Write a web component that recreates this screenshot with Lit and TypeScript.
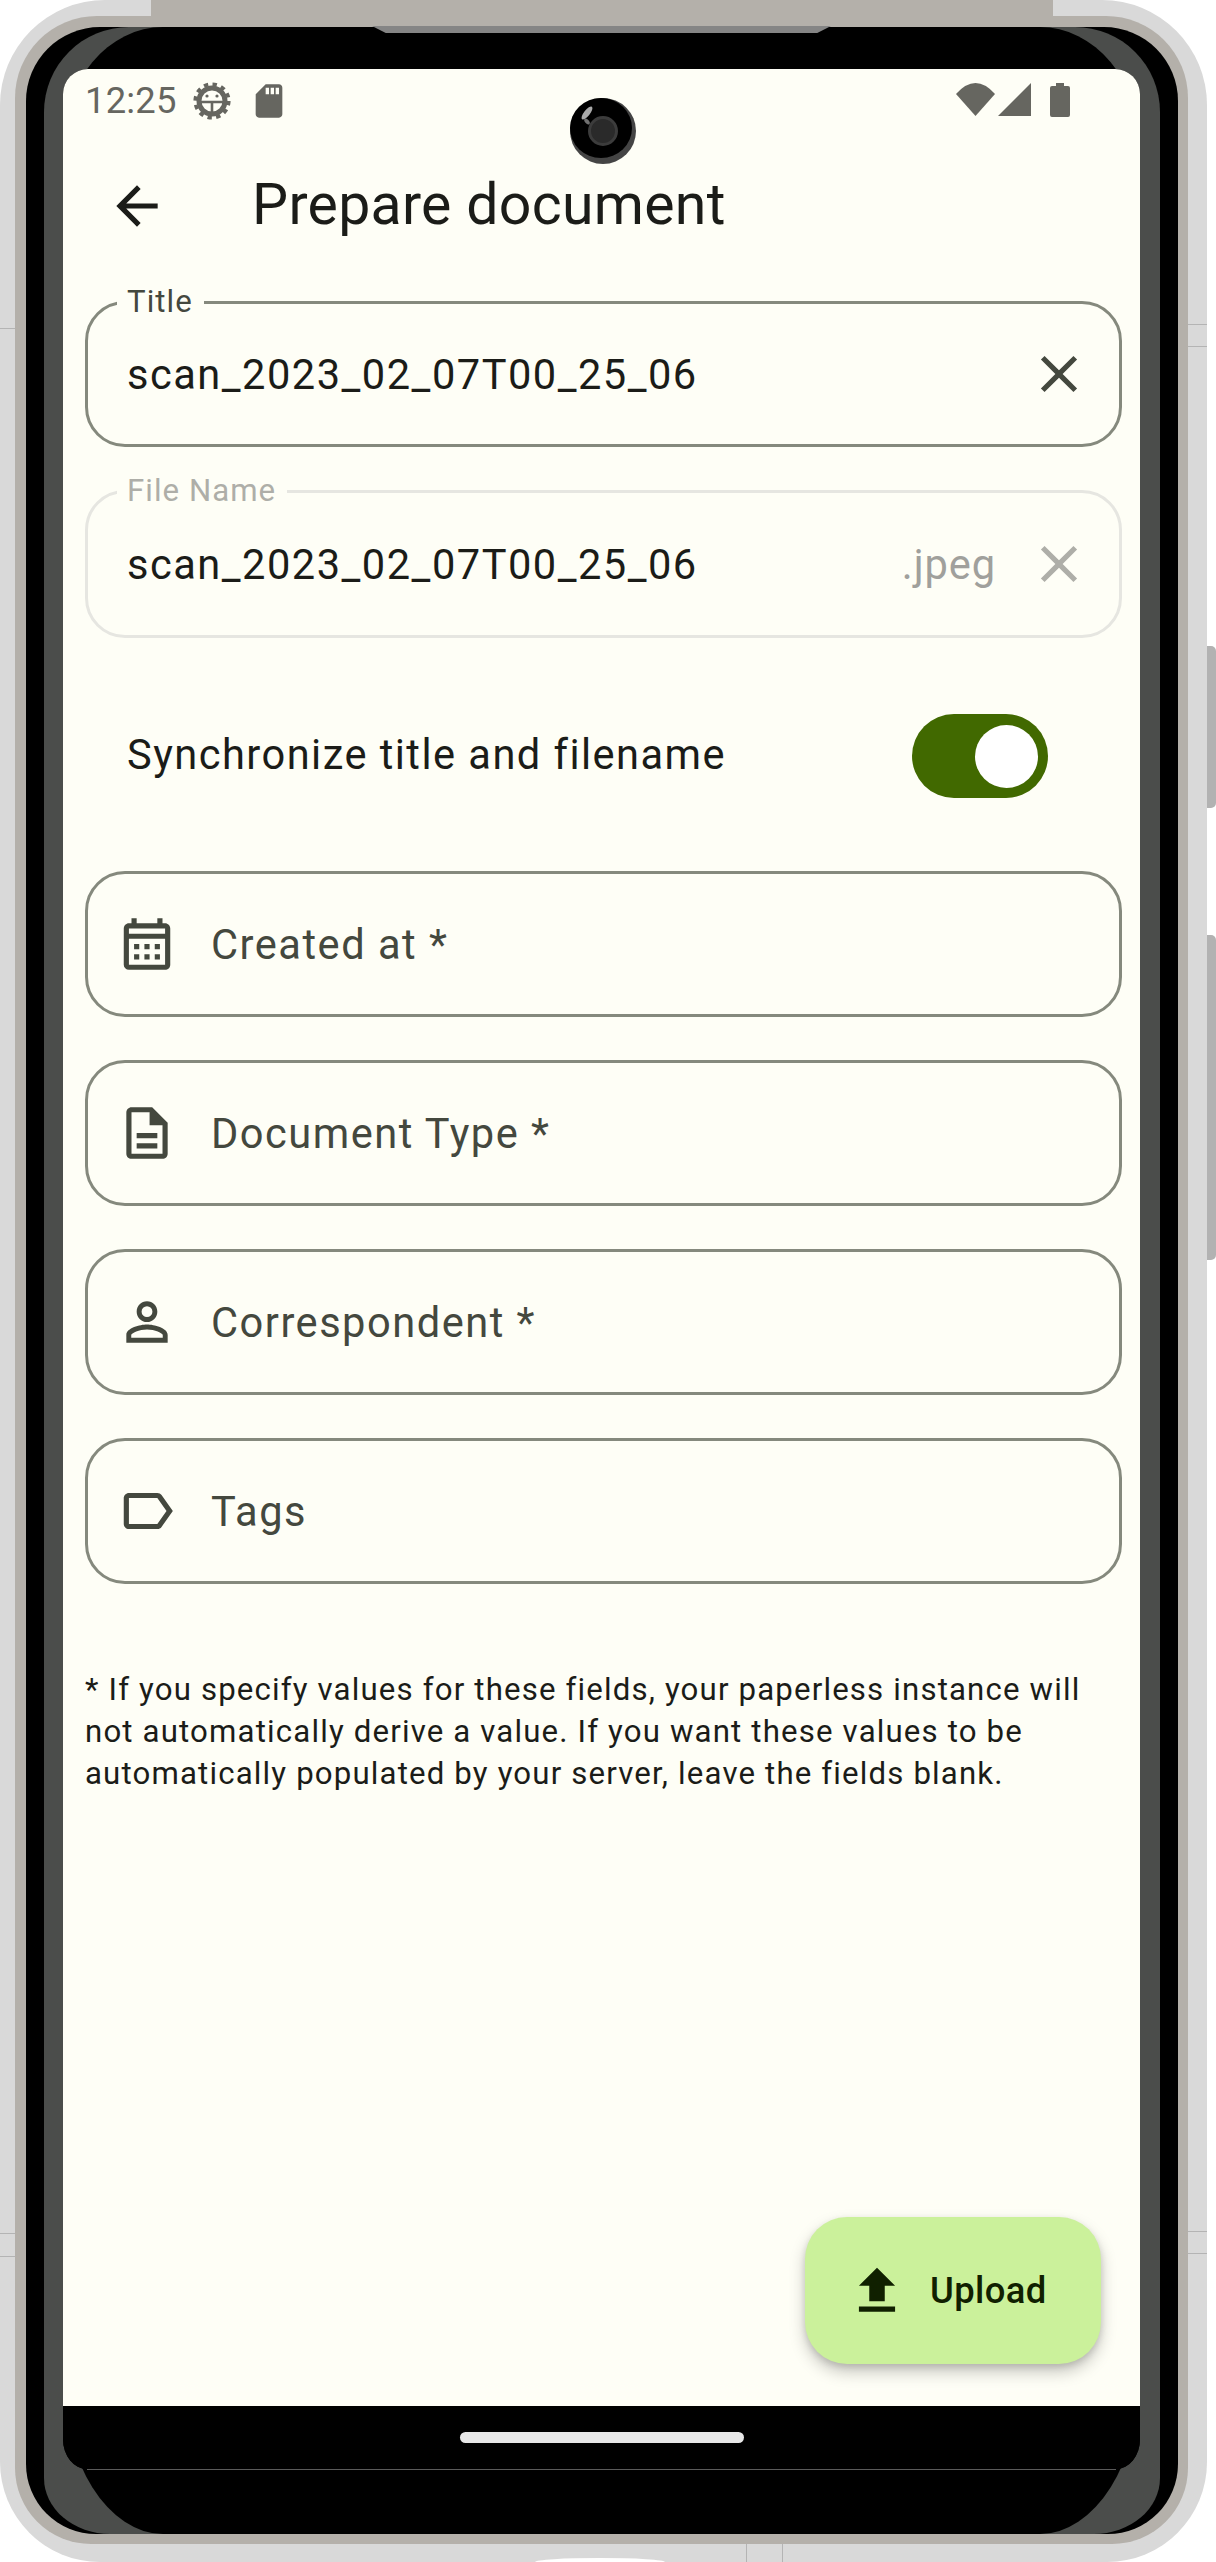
import { LitElement, html, css, svg } from "lit";
import { customElement } from "lit/decorators.js";

const ICONS = {
  back: "M20 11H7.83l5.59-5.59L12 4l-8 8 8 8 1.41-1.41L7.83 13H20v-2z",
  close:
    "M19 6.41 17.59 5 12 10.59 6.41 5 5 6.41 10.59 12 5 17.59 6.41 19 12 13.41 17.59 19 19 17.59 13.41 12z",
  calendar:
    "M19 4h-1V2h-2v2H8V2H6v2H5c-1.11 0-1.99.9-1.99 2L3 20a2 2 0 0 0 2 2h14c1.1 0 2-.9 2-2V6c0-1.1-.9-2-2-2zm0 16H5V10h14v10zm0-12H5V6h14v2zM9 14H7v-2h2v2zm4 0h-2v-2h2v2zm4 0h-2v-2h2v2zm-8 4H7v-2h2v2zm4 0h-2v-2h2v2zm4 0h-2v-2h2v2z",
  description:
    "M8 16h8v2H8zm0-4h8v2H8zm6-10H6c-1.1 0-2 .9-2 2v16c0 1.1.89 2 1.99 2H18c1.1 0 2-.9 2-2V8l-6-6zm4 18H6V4h7v5h5v11z",
  person:
    "M12 5.9a2.1 2.1 0 1 1 0 4.2 2.1 2.1 0 0 1 0-4.2m0 9c2.97 0 6.1 1.46 6.1 2.1v1.1H5.9V17c0-.64 3.13-2.1 6.1-2.1M12 4C9.79 4 8 5.79 8 8s1.79 4 4 4 4-1.79 4-4-1.79-4-4-4zm0 9c-2.67 0-8 1.34-8 4v3h16v-3c0-2.66-5.33-4-8-4z",
  label:
    "M17.63 5.84C17.27 5.33 16.67 5 16 5L5 5.01C3.9 5.01 3 5.9 3 7v10c0 1.1.9 1.99 2 1.99L16 19c.67 0 1.27-.33 1.63-.84L22 12l-4.37-6.16zM16 17H5V7h11l3.55 5L16 17z",
  upload: "M5 20h14v-2H5v2zm0-10h4v6h6v-6h4l-7-7-7 7z",
  sd: "M18 2h-8L4.02 8 4 20c0 1.1.9 2 2 2h12c1.1 0 2-.9 2-2V4c0-1.1-.9-2-2-2zm-6 6h-2V4h2v4zm3 0h-2V4h2v4zm3 0h-2V4h2v4z",
};

const icon = (d: string, cls = "icon") =>
  html`<svg class=${cls} viewBox="0 0 24 24" fill="currentColor">${svg`<path d=${d}></path>`}</svg>`;

@customElement("app-root")
export class AppRoot extends LitElement {
  static styles = css`
    :host {
      display: block;
      position: relative;
      width: 1216px;
      height: 2562px;
      background: #fff;
      font-family: Roboto, "Liberation Sans", sans-serif;
      overflow: hidden;
    }

    .shell {
      box-sizing: border-box;
      width: 1207px;
      height: 2562px;
      padding: 16px 19px 18px 15px;
      background: #d9d9d9;
      border-radius: 105px 105px 100px 100px;
    }
    .band {
      height: 100%;
      box-sizing: border-box;
      padding: 11px 10px 10px 11px;
      background: #b4b0aa;
      border-radius: 82px 82px 76px 76px;
    }
    .bezel {
      height: 100%;
      box-sizing: border-box;
      padding: 0 18px 0 18px;
      background: #000;
      border-radius: 74px 74px 70px 70px;
    }
    .rim {
      height: 100%;
      box-sizing: border-box;
      padding: 0 20px 0 19px;
      background: #4b4d4b;
      border-radius: 85px 85px 66px 66px / 85px 85px 56px 56px;
    }
    .inner {
      height: 100%;
      box-sizing: border-box;
      padding-top: 42px;
      background: #000;
      border-radius: 100px 100px 100px 100px / 120px 120px 160px 160px;
    }

    .top-strip {
      position: absolute;
      left: 151px;
      top: 0;
      width: 902px;
      height: 26px;
      background: #b4b0aa;
    }
    .notch {
      position: absolute;
      left: 372px;
      top: 26px;
      width: 459px;
      height: 7px;
      background: #858585;
      clip-path: polygon(0 0, 100% 0, 97% 100%, 3% 100%);
    }
    .side-btn {
      position: absolute;
      left: 1207px;
      width: 9px;
      background: #b2b2b2;
      border-radius: 0 5px 5px 0;
    }
    .btn-power {
      top: 646px;
      height: 162px;
    }
    .btn-volume {
      top: 935px;
      height: 325px;
    }
    .tick {
      position: absolute;
      height: 1px;
      background: #b4b4b4;
    }
    .tick-v {
      position: absolute;
      top: 2544px;
      width: 1px;
      height: 18px;
      background: #b4b4b4;
    }
    .hump {
      position: absolute;
      left: 535px;
      top: 2558px;
      width: 130px;
      height: 8px;
      background: #fff;
      border-radius: 50% 50% 0 0;
    }

    .camera {
      position: absolute;
      left: 570px;
      top: 98px;
      width: 66px;
      height: 66px;
      border-radius: 50%;
      background: #444;
    }
    .camera-body {
      position: absolute;
      left: 0;
      top: 0;
      width: 62px;
      height: 60px;
      border-radius: 50%;
      background: #000;
    }
    .camera-lens {
      position: absolute;
      left: 18px;
      top: 18px;
      width: 30px;
      height: 30px;
      box-sizing: border-box;
      border-radius: 50%;
      background: #2a2a2a;
      border: 3px solid #3c3c3c;
    }
    .camera-glint {
      position: absolute;
      left: 14px;
      top: 7px;
      width: 6px;
      height: 16px;
      border-radius: 50%;
      background: #aaa;
      transform: rotate(38deg);
    }
    .camera-dot {
      position: absolute;
      left: 15px;
      top: 20px;
      width: 4px;
      height: 7px;
      border-radius: 50%;
      background: #707070;
      transform: rotate(-40deg);
    }

    .screen {
      position: relative;
      display: flex;
      flex-direction: column;
      height: 2400px;
      border-radius: 25px 25px 24px 24px / 25px 25px 30px 30px;
      overflow: hidden;
      background: #000;
    }
    .nav-line {
      height: 1px;
      margin: 0 24px;
      background: #5a5a5a;
    }
    .content {
      position: relative;
      flex: 1;
      background: #fefef6;
      color: #1b1c18;
    }
    .nav {
      display: flex;
      align-items: center;
      justify-content: center;
      height: 63px;
      background: #000;
    }
    .home-bar {
      width: 284px;
      height: 11px;
      border-radius: 6px;
      background: #e8e8e8;
    }

    .status {
      display: flex;
      align-items: center;
      height: 64px;
      padding: 0 70px 0 22px;
      color: #666660;
    }
    .clock {
      font-size: 36.4px;
      line-height: 64px;
      width: 108px;
      letter-spacing: 0.2px;
    }
    .gear {
      width: 38px;
      height: 38px;
      margin-right: 25px;
    }
    .sd {
      width: 40px;
      height: 40px;
      margin-left: -7px;
    }
    .status-right {
      display: flex;
      align-items: center;
      margin: -3px 0 0 auto;
    }
    .wifi {
      width: 39px;
      height: 33px;
      margin-right: 3px;
    }
    .signal {
      width: 33px;
      height: 33px;
      margin-right: 19px;
    }
    .battery {
      width: 20px;
      height: 34px;
    }

    .appbar {
      display: flex;
      align-items: center;
      height: 146px;
      padding-left: 43px;
    }
    .back {
      width: 62px;
      height: 62px;
      margin-right: 84px;
    }
    h1 {
      margin: 0 0 3px;
      font-size: 57.2px;
      font-weight: 400;
      line-height: 143px;
      letter-spacing: 0.3px;
    }

    .form {
      display: flex;
      flex-direction: column;
      padding: 22px 18px 0 22px;
    }
    .field {
      position: relative;
      display: flex;
      align-items: center;
      box-sizing: border-box;
      height: 146px;
      padding: 0 29px 0 39px;
      border: 3px solid #85897d;
      border-radius: 40px;
      margin-bottom: 43px;
      font-size: 41.6px;
      letter-spacing: 1.5px;
      color: #1b1c18;
    }
    .field.disabled {
      height: 148px;
      border-color: #e6e6e1;
    }
    .float-label {
      position: absolute;
      left: 29px;
      top: -19px;
      padding: 0 11px 0 10px;
      background: #fefef6;
      font-size: 31.2px;
      line-height: 34px;
      letter-spacing: 1.04px;
      color: #44483e;
    }
    .disabled .float-label {
      color: #aeaea8;
    }
    .value {
      flex: 1;
    }
    .suffix {
      color: #a0a09c;
      letter-spacing: 0.9px;
      margin-right: 32px;
    }
    .clear {
      width: 62px;
      height: 62px;
      color: #44483e;
    }
    .disabled .clear {
      color: #aeaea8;
    }
    .field.prefixed {
      padding-left: 28px;
      color: #44483e;
    }
    .prefix {
      width: 62px;
      height: 62px;
      margin-right: 33px;
      color: #44483e;
    }

    .sync {
      display: flex;
      align-items: center;
      justify-content: space-between;
      height: 233px;
      margin-top: -43px;
      padding: 0 74px 0 42px;
      font-size: 41.6px;
      letter-spacing: 1.46px;
    }
    .switch {
      position: relative;
      width: 136px;
      height: 84px;
      margin-top: 2px;
      border-radius: 42px;
      background: #416900;
    }
    .knob {
      position: absolute;
      right: 10px;
      top: 11px;
      width: 63px;
      height: 63px;
      border-radius: 50%;
      background: #fff;
    }

    .hint {
      margin: 42px 20px 0 0;
      font-size: 31.2px;
      line-height: 42px;
      letter-spacing: 1.16px;
      color: #1b1c18;
    }

    .fab {
      position: absolute;
      right: 39px;
      bottom: 42px;
      display: flex;
      align-items: center;
      box-sizing: border-box;
      width: 296px;
      height: 147px;
      padding-left: 41px;
      border-radius: 42px;
      background: #cbf19b;
      color: #102000;
      font-size: 36.4px;
      font-weight: 500;
      letter-spacing: 0.4px;
      box-shadow: 0 8px 16px rgba(0, 0, 0, 0.22), 0 3px 6px rgba(0, 0, 0, 0.12);
    }
    .fab svg {
      width: 62px;
      height: 62px;
      margin-right: 22px;
    }
  `;

  private field(label: string, value: string, disabled = false, suffix = "") {
    return html`
      <div class="field ${disabled ? "disabled" : ""}">
        <span class="float-label">${label}</span>
        <span class="value">${value}</span>
        ${suffix ? html`<span class="suffix">${suffix}</span>` : ""}
        ${icon(ICONS.close, "clear")}
      </div>
    `;
  }

  private picker(path: string, label: string) {
    return html`
      <div class="field prefixed">
        ${icon(path, "prefix")}
        <span class="value">${label}</span>
      </div>
    `;
  }

  private gear() {
    return html`<svg class="gear" viewBox="0 0 38 38" fill="none" stroke="currentColor">
      ${svg`
        <circle cx="19" cy="19" r="16.800" stroke-width="3.600" stroke-dasharray="4.400 4.400"></circle>
        <circle cx="19" cy="19" r="13" stroke-width="5"></circle>
        <path d="M7 20H31M19 20V31" stroke-width="2.600"></path>
        <circle cx="14" cy="14" r="1.600" fill="currentColor" stroke="none"></circle>
        <circle cx="24" cy="14" r="1.600" fill="currentColor" stroke="none"></circle>
      `}
    </svg>`;
  }

  render() {
    return html`
      <div class="shell">
        <div class="band">
          <div class="bezel">
            <div class="rim">
              <div class="inner">
                <div class="screen">
                  <div class="content">
                    <div class="status">
                      <span class="clock">12:25</span>
                      ${this.gear()} ${icon(ICONS.sd, "sd")}
                      <div class="status-right">
                        <svg class="wifi" viewBox="0 0 39 33" fill="currentColor">
                          <path d="M0 11Q19.500 -11 39 11L19.500 33z"></path>
                        </svg>
                        <svg class="signal" viewBox="0 0 33 33" fill="currentColor">
                          <path d="M33 0V33H0z"></path>
                        </svg>
                        <svg class="battery" viewBox="0 0 20 34" fill="currentColor">
                          <path d="M6 0H14V3H18a2 2 0 0 1 2 2V32a2 2 0 0 1-2 2H2a2 2 0 0 1-2-2V5a2 2 0 0 1 2-2H6z"></path>
                        </svg>
                      </div>
                    </div>
                    <div class="appbar">
                      ${icon(ICONS.back, "back")}
                      <h1>Prepare document</h1>
                    </div>
                    <div class="form">
                      ${this.field("Title", "scan_2023_02_07T00_25_06")}
                      ${this.field("File Name", "scan_2023_02_07T00_25_06", true, ".jpeg")}
                      <div class="sync">
                        <span>Synchronize title and filename</span>
                        <div class="switch"><div class="knob"></div></div>
                      </div>
                      ${this.picker(ICONS.calendar, "Created at *")}
                      ${this.picker(ICONS.description, "Document Type *")}
                      ${this.picker(ICONS.person, "Correspondent *")}
                      ${this.picker(ICONS.label, "Tags")}
                      <p class="hint">
                        * If you specify values for these fields, your paperless instance will
                        not automatically derive a value. If you want these values to be
                        automatically populated by your server, leave the fields blank.
                      </p>
                    </div>
                    <div class="fab">${icon(ICONS.upload)}<span>Upload</span></div>
                  </div>
                  <div class="nav"><div class="home-bar"></div></div>
                </div>
                <div class="nav-line"></div>
              </div>
            </div>
          </div>
        </div>
      </div>
      <div class="top-strip"></div>
      <div class="notch"></div>
      <div class="side-btn btn-power"></div>
      <div class="side-btn btn-volume"></div>
      <div class="tick" style="left:0;top:328px;width:15px"></div>
      <div class="tick" style="left:0;top:2233px;width:15px"></div>
      <div class="tick" style="left:0;top:2256px;width:15px"></div>
      <div class="tick" style="left:1188px;top:324px;width:19px"></div>
      <div class="tick" style="left:1188px;top:346px;width:19px"></div>
      <div class="tick" style="left:1188px;top:2231px;width:19px"></div>
      <div class="tick" style="left:1188px;top:2253px;width:19px"></div>
      <div class="tick-v" style="left:746px"></div>
      <div class="tick-v" style="left:782px"></div>
      <div class="hump"></div>
      <div class="camera">
        <div class="camera-body">
          <div class="camera-lens"></div>
          <div class="camera-glint"></div>
          <div class="camera-dot"></div>
        </div>
      </div>
    `;
  }
}
